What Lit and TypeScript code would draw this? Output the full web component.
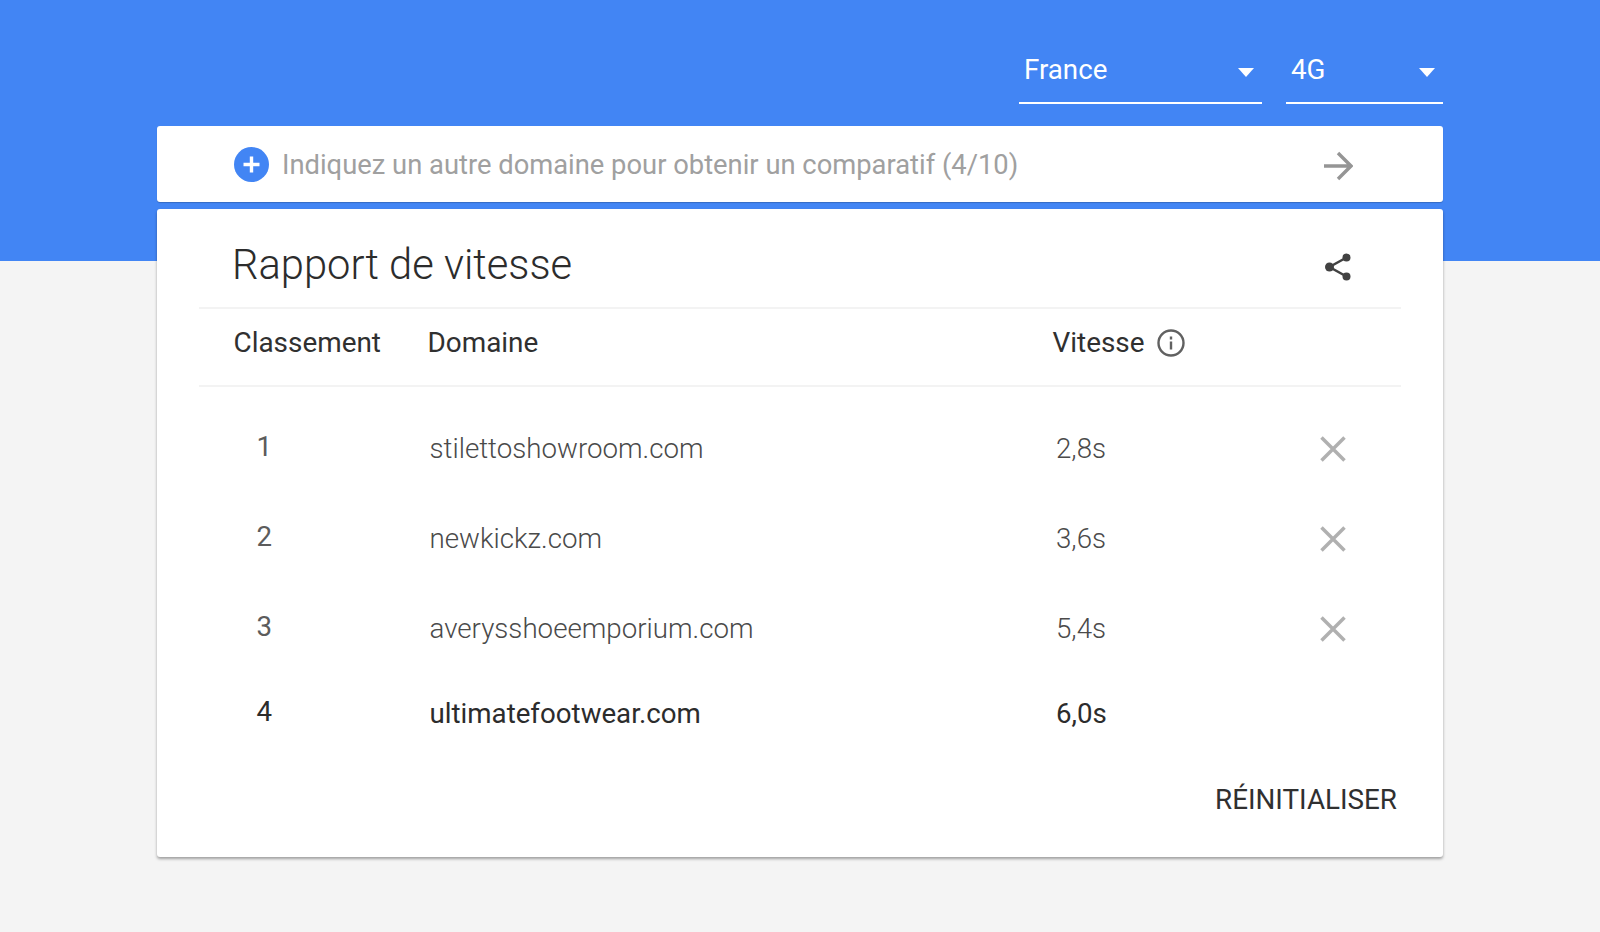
import { LitElement, html, css, svg } from "lit";
import { customElement } from "lit/decorators.js";

const rows = [
  { rank: "1", domain: "stilettoshowroom.com", speed: "2,8s", removable: true },
  { rank: "2", domain: "newkickz.com", speed: "3,6s", removable: true },
  { rank: "3", domain: "averysshoeemporium.com", speed: "5,4s", removable: true },
  { rank: "4", domain: "ultimatefootwear.com", speed: "6,0s", removable: false },
];

const closeIcon = svg`<svg class="x" width="26" height="26" viewBox="0 0 26 26"><path d="M1.500 1.500 L24.500 24.500 M24.500 1.500 L1.500 24.500" stroke="#b0b0b0" stroke-width="3.500" fill="none"/></svg>`;

@customElement("app-root")
export class AppRoot extends LitElement {
  static styles = css`
    :host {
      display: block;
      min-height: 932px;
      background: linear-gradient(#4285f4 261px, #f4f4f4 261px);
      font-family: Roboto, "Liberation Sans", sans-serif;
      overflow: hidden;
    }
    .wrap { width: 1286px; margin: 0 auto; padding-top: 44px; }
    .selects { display: flex; justify-content: flex-end; gap: 24px; height: 82px; }
    .select {
      height: 60px; box-sizing: border-box; border-bottom: 2px solid #fff;
      color: #fff; font-size: 27.7px; display: flex; justify-content: space-between;
      padding: 8px 8px 0 5px; line-height: 36px;
    }
    .s1 { width: 243px; }
    .s2 { width: 157px; }
    .tri { width: 0; height: 0; border: 8.5px solid transparent; border-top: 9px solid #fff; border-bottom: 0; margin-top: 16px; }
    .card { background: #fff; border-radius: 3px; }
    .search {
      height: 76px; display: flex; align-items: center; padding: 0 90px 0 77px;
      box-shadow: 0 1px 1px rgba(0,0,0,.2); margin-bottom: 7px;
    }
    .plus { margin-right: 13px; flex: none; display: block; }
    .ph { flex: 1; font-size: 27.35px; color: #a0a0a0; position: relative; top: 1px; }
    .arrow { display: block; margin-top: 4px; }
    .report { height: 648px; box-sizing: border-box; padding: 0 42px; box-shadow: 0 2px 3px rgba(0,0,0,.35); }
    .title-row { height: 98px; display: flex; justify-content: space-between; border-bottom: 2px solid #f3f3f3; padding: 0 50px 0 33px; }
    h1 { margin: 0; font-size: 41.7px; font-weight: 300; color: #2c2c2c; line-height: 52px; padding-top: 30px; }
    .share { margin-top: 44px; display: block; }
    .cols { display: grid; grid-template-columns: 194px 625px 1fr; padding-left: 35px; }
    .head { align-items: start; border-bottom: 2px solid #f3f3f3; font-size: 27.9px; color: #303030; font-weight: 400; padding-top: 14px; height: 62px; }
    .head > div { display: flex; align-items: center; margin-left: -0.5px; line-height: 40px; }
    .info { margin-left: 12px; display: block; }
    .body { padding-top: 16px; }
    .row { height: 90.3px; align-items: center; font-size: 27.7px; font-weight: 300; color: #4a4a4a; }
    .row.last { height: 80px; font-weight: 400; color: #2c2c2c; }
    .rank { padding-left: 22.500px; position: relative; top: -2px; font-weight: 400; color: #5c5c5c; }
    .last .rank { color: #2c2c2c; }
    .domain { padding-left: 1.500px; }
    .speed { padding-left: 3px; display: flex; justify-content: space-between; padding-right: 55px; align-items: center; }
    .x { display: block; margin-top: 1px; }
    .foot { text-align: right; font-size: 27.8px; color: #303030; padding: 28px 4px 0 0; line-height: 36px; }
  `;

  render() {
    return html`
      <div class="wrap">
        <div class="selects">
          <div class="select s1"><span>France</span><span class="tri"></span></div>
          <div class="select s2"><span>4G</span><span class="tri"></span></div>
        </div>
        <div class="card search">
          <svg class="plus" width="35" height="35" viewBox="0 0 35 35"><circle cx="17.5" cy="17.5" r="17.5" fill="#4285f4"/><path d="M17.5 9.5v16M9.5 17.5h16" stroke="#fff" stroke-width="3.4"/></svg>
          <div class="ph">Indiquez un autre domaine pour obtenir un comparatif (4/10)</div>
          <svg class="arrow" width="30" height="30" viewBox="0 0 30 30"><path d="M1 15h26M15 2l13 13-13 13" stroke="#959595" stroke-width="3.400" fill="none"/></svg>
        </div>
        <div class="card report">
          <div class="title-row">
            <h1>Rapport de vitesse</h1>
            <svg class="share" width="26" height="28" viewBox="0 0 26 28"><g fill="#424242"><circle cx="4.500" cy="14" r="4.500"/><circle cx="21.500" cy="4.500" r="4"/><circle cx="21.500" cy="23.500" r="4"/></g><path d="M21.500 4.500L4.500 14l17 9.500" stroke="#424242" stroke-width="2.500" fill="none"/></svg>
          </div>
          <div class="cols head">
            <div>Classement</div>
            <div>Domaine</div>
            <div>Vitesse
              <svg class="info" width="28" height="28" viewBox="0 0 28 28"><circle cx="14" cy="14" r="12.500" stroke="#616161" stroke-width="2.400" fill="none"/><path d="M14 12.500v8M14 7.500v3" stroke="#616161" stroke-width="2.400"/></svg>
            </div>
          </div>
          <div class="body">
            ${rows.map((r) => html`
              <div class="cols row ${r.removable ? "" : "last"}">
                <div class="rank">${r.rank}</div>
                <div class="domain">${r.domain}</div>
                <div class="speed"><span>${r.speed}</span>${r.removable ? closeIcon : ""}</div>
              </div>`)}
          </div>
          <div class="foot">RÉINITIALISER</div>
        </div>
      </div>
    `;
  }
}
